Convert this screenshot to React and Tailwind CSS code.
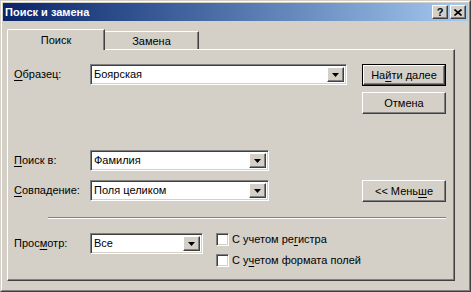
const raised =
  "border border-t-white border-l-white border-r-[#404040] border-b-[#404040] shadow-[inset_-1px_-1px_0_#808080] bg-[#d4d0c8]";
const sunken =
  "border border-t-[#808080] border-l-[#808080] border-r-white border-b-white shadow-[inset_1px_1px_0_#404040,inset_-1px_-1px_0_#d4d0c8] bg-white";

function Arrow() {
  return (
    <svg width="7" height="4" viewBox="0 0 7 4">
      <path d="M0 0h7L3.5 4z" fill="#000" />
    </svg>
  );
}

function Combo({ value, width }) {
  return (
    <div className={`${sunken} ${width} h-[21px] flex items-stretch p-[2px]`}>
      <div className="flex-1 flex items-center pl-[1px] text-black">{value}</div>
      <div className={`${raised} w-[17px] flex items-center justify-center`}>
        <Arrow />
      </div>
    </div>
  );
}

function Button({ children, isDefault }) {
  if (isDefault) {
    return (
      <div className="w-[84px] h-[22px] border border-black">
        <div className={`${raised} w-full h-full flex items-center justify-center`}>
          {children}
        </div>
      </div>
    );
  }
  return (
    <div className={`${raised} w-[84px] h-[22px] flex items-center justify-center`}>
      {children}
    </div>
  );
}

function Label({ children }) {
  return <div className="w-[76px] h-[21px] flex items-center">{children}</div>;
}

function Checkbox({ children }) {
  return (
    <div className="flex items-center h-[13px]">
      <div className={`${sunken} w-[13px] h-[13px]`} />
      <span className="ml-[3px]">{children}</span>
    </div>
  );
}

const U = ({ children }) => <u className="underline-offset-[2px]">{children}</u>;

export default function App() {
  return (
    <div
      className="w-[471px] h-[292px] bg-[#d4d0c8] border border-t-[#d4d0c8] border-l-[#d4d0c8] border-r-[#404040] border-b-[#404040] text-[11px] text-black leading-none"
      style={{ fontFamily: '"Liberation Sans", Arial, sans-serif' }}
    >
      <div className="h-full border border-t-white border-l-white border-r-[#808080] border-b-[#808080] p-[1px] flex flex-col">
        {/* caption */}
        <div className="h-[18px] flex items-center bg-gradient-to-r from-[#0a246a] to-[#a6caf0] pl-[2px] pr-[2px]">
          <span className="text-white font-bold text-[11px]">Поиск и замена</span>
          <div className="ml-auto flex gap-[2px]">
            <div className={`${raised} w-[16px] h-[14px] flex items-center justify-center font-bold text-[11px]`}>
              ?
            </div>
            <div className={`${raised} w-[16px] h-[14px] flex items-center justify-center`}>
              <svg width="8" height="7" viewBox="0 0 8 7">
                <path d="M0.5 0.5L7.5 6.5M7.5 0.5L0.5 6.5" stroke="#000" strokeWidth="1.6" />
              </svg>
            </div>
          </div>
        </div>

        {/* body */}
        <div className="pl-[4px] pt-[8px]">
          <div className="h-[20px] flex items-end">
            <div className="relative z-10 -mb-[1px] w-[98px] h-[21px] bg-[#d4d0c8] border-t border-l border-r border-t-white border-l-white border-r-[#404040] shadow-[inset_-1px_0_0_#808080] rounded-tl-[2px] flex items-center justify-center">
              Поиск
            </div>
            <div className="w-[94px] h-[18px] border-t border-r border-t-white border-r-[#404040] shadow-[inset_-1px_0_0_#808080] flex items-center justify-center pt-[2px]">
              Замена
            </div>
          </div>

          <div className="w-[448px] h-[232px] border border-t-white border-l-white border-r-[#404040] border-b-[#404040] shadow-[inset_-1px_-1px_0_#808080] pl-[6px] pt-[14px]">
            <div className="flex items-start">
              <Label>
                <span>
                  <U>О</U>бразец:
                </span>
              </Label>
              <Combo value="Боярская" width="w-[257px]" />
              <div className="ml-[15px] flex flex-col gap-[6px]">
                <Button isDefault>
                  <span>
                    На<U>й</U>ти далее
                  </span>
                </Button>
                <Button>Отмена</Button>
              </div>
            </div>

            <div className="flex items-start mt-[36px]">
              <div className="flex flex-col gap-[9px]">
                <div className="flex">
                  <Label>
                    <span>
                      <U>П</U>оиск в:
                    </span>
                  </Label>
                  <Combo value="Фамилия" width="w-[179px]" />
                </div>
                <div className="flex">
                  <Label>
                    <span>
                      <U>С</U>овпадение:
                    </span>
                  </Label>
                  <Combo value="Поля целиком" width="w-[179px]" />
                </div>
              </div>
              <div className="ml-[93px] mt-[30px]">
                <Button>
                  <span>
                    &lt;&lt; Мень<U>ш</U>е
                  </span>
                </Button>
              </div>
            </div>

            <div className="mt-[15px] ml-[34px] w-[398px] border-t border-b border-t-[#808080] border-b-white" />

            <div className="flex items-start mt-[14px]">
              <Label>
                <span>
                  Прос<U>м</U>отр:
                </span>
              </Label>
              <Combo value="Все" width="w-[113px]" />
              <div className="ml-[13px] flex flex-col gap-[8px]">
                <Checkbox>
                  С учетом ре<U>г</U>истра
                </Checkbox>
                <Checkbox>
                  С у<U>ч</U>етом формата полей
                </Checkbox>
              </div>
            </div>
          </div>
        </div>
      </div>
    </div>
  );
}
